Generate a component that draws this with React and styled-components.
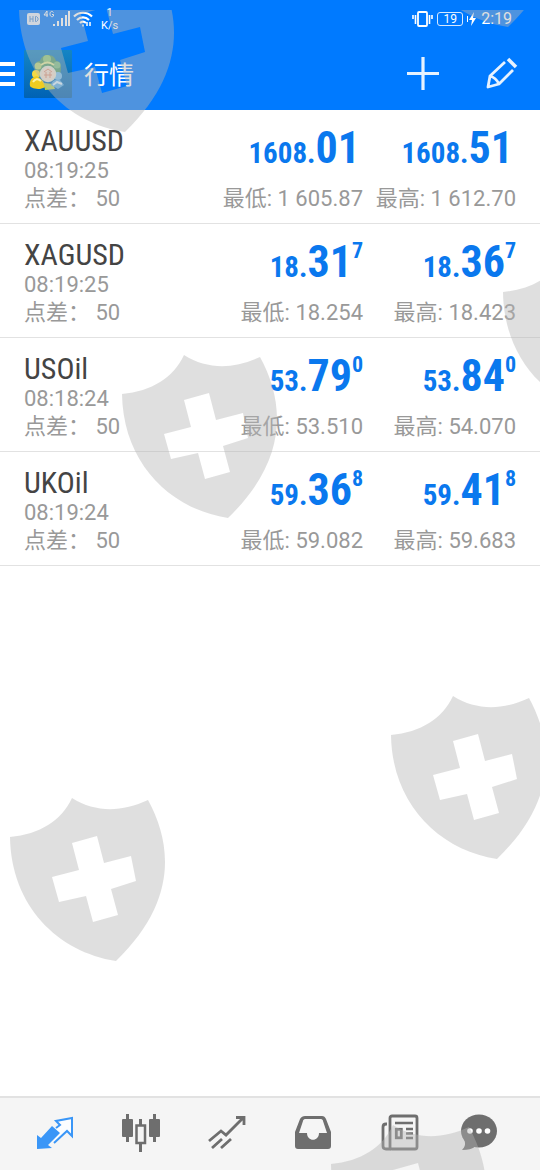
import React from "react";
import styled, { createGlobalStyle } from "styled-components";

const BLUE = "#007aff";

const GlobalStyle = createGlobalStyle`
  * { box-sizing: border-box; }
  body {
    margin: 0;
    background: #fff;
    font-family: Roboto, "Noto Sans CJK SC", sans-serif;
  }
  button { border: 0; padding: 0; background: none; font: inherit; color: inherit; cursor: pointer; }
  svg { display: block; }
`;

const Page = styled.div`
  position: relative;
  display: flex;
  flex-direction: column;
  min-height: 100vh;
  background: #fff;
`;

const TopArea = styled.header`
  background: ${BLUE};
  color: #fff;
`;

const StatusBar = styled.div`
  display: flex;
  justify-content: space-between;
  align-items: center;
  height: 38px;
  padding: 0 28px 0 26px;
`;

const StatusGroup = styled.div`
  display: flex;
  align-items: center;
  gap: 4px;
`;

const NetSpeed = styled.div`
  padding-left: 4px;
  font-size: 11px;
  line-height: 13px;
  text-align: center;
`;

const Battery = styled.span`
  width: 26px;
  height: 14px;
  border: 1px solid #d5e8ff;
  border-radius: 3px;
  font-size: 12px;
  line-height: 12px;
  text-align: center;
`;

const Clock = styled.time`
  font-size: 16px;
  line-height: 20px;
`;

const TitleBar = styled.div`
  display: flex;
  align-items: center;
  height: 72px;
  padding-right: 22px;
`;

const AppMark = styled.div`
  margin: 0 12px 0 9px;
`;

const Title = styled.h1`
  flex: 1;
  margin: 0;
  padding-top: 4px;
  font-size: 25px;
  line-height: 36px;
  font-weight: 400;
`;

const Actions = styled.div`
  display: flex;
  gap: 44px;
`;

const QuoteList = styled.ul`
  flex: 1;
  margin: 0;
  padding: 0;
  list-style: none;
`;

const QuoteRow = styled.li`
  display: grid;
  grid-template-columns: 1fr 141px 141px;
  column-gap: 12px;
  padding: 14px 24px 10px;
  border-bottom: 1px solid #e2e2e2;
  white-space: nowrap;
`;

const SymbolName = styled.h2`
  margin: 0;
  color: #444;
  font-family: "Roboto Condensed", "Liberation Sans Narrow", Roboto, sans-serif;
  font-size: 30px;
  line-height: 33px;
  font-weight: 400;
`;

const Detail = styled.div`
  color: #999;
  font-size: 22px;
  line-height: 28px;
`;

const Side = styled.div`
  display: flex;
  flex-direction: column;
  align-items: flex-end;
`;

const Price = styled.div`
  height: 61px;
  padding-right: ${(p) => (p.$pip ? 0 : 3)}px;
  color: #0a78ee;
  font-family: "Roboto Condensed", "Liberation Sans Narrow", Roboto, sans-serif;
  font-size: 29px;
  font-weight: 700;
  line-height: 48px;
`;

const Big = styled.span`
  font-size: 44px;
`;

const Pip = styled.sup`
  font-size: 22px;
  line-height: 0;
  vertical-align: 19px;
`;

const TabBar = styled.nav`
  display: flex;
  height: 74px;
  padding: 0 12px;
  border-top: 2px solid #e2e2e2;
  background: #f5f5f5;
`;

const Tab = styled.button`
  flex: 1;
  display: flex;
  align-items: center;
  justify-content: center;
  color: ${(p) => (p.$active ? "#3a96f7" : "#6e6e6e")};
`;

const WatermarkLayer = styled.div`
  position: absolute;
  inset: 10px 0 0 0;
  overflow: hidden;
  pointer-events: none;
`;

const Shield = styled.svg`
  position: absolute;
  left: ${(p) => p.$x}px;
  top: ${(p) => p.$y}px;
`;

const quotes = [
  { name: "XAUUSD", time: "08:19:25", bid: ["1608.", "01", ""], ask: ["1608.", "51", ""], low: "1 605.87", high: "1 612.70" },
  { name: "XAGUSD", time: "08:19:25", bid: ["18.", "31", "7"], ask: ["18.", "36", "7"], low: "18.254", high: "18.423" },
  { name: "USOil", time: "08:18:24", bid: ["53.", "79", "0"], ask: ["53.", "84", "0"], low: "53.510", high: "54.070" },
  { name: "UKOil", time: "08:19:24", bid: ["59.", "36", "8"], ask: ["59.", "41", "8"], low: "59.082", high: "59.683" },
];

const shields = [
  [17, -43], [400, -148], [501, 241], [120, 343], [389, 684], [8, 786], [329, 1113],
];

function Quote({ parts, label, value }) {
  const [small, big, pip] = parts;
  return (
    <Side>
      <Price $pip={pip}>
        {small}<Big>{big}</Big>{pip && <Pip>{pip}</Pip>}
      </Price>
      <Detail>{label}: {value}</Detail>
    </Side>
  );
}

function SignalIcons() {
  return (
    <svg width="67" height="20" viewBox="0 0 67 20" fill="none" stroke="#fff">
      <rect x="1" y="4" width="13" height="12" rx="2" fill="#e6f0fb" stroke="none" />
      <path d="M4 7v6M7 7v6M4 10h3M9.500 7.500v5h1l1.500-1.500v-2l-1.500-1.500z" stroke="#4b90dc" />
      <path d="M21 2l-3 4h4M21 2v6M27.500 3.500C26 1.500 24 2.500 24 5s2 3.500 3.500 2V5.500H26" strokeWidth="1" />
      <path d="M28 17v-2M32 17v-5M36 17V9M40 17V6M43 17V2" strokeWidth="2" />
      <path d="M48 7.500c5-5 13-5 18 0M51 11c3.500-3.500 8.500-3.500 12 0M54 14c2-2 4-2 6 0" strokeWidth="2.200" />
      <path d="M57 17.500v-2M61 13v4M64 13v4" strokeWidth="1.500" />
    </svg>
  );
}

function TerminalMark() {
  return (
    <svg width="48" height="48" viewBox="0 0 48 48">
      <defs>
        <linearGradient id="tile" x1="0" y1="0" x2="0" y2="1">
          <stop offset="0" stopColor="#1585c4" />
          <stop offset="1" stopColor="#0062b4" />
        </linearGradient>
      </defs>
      <rect width="48" height="48" rx="1" fill="url(#tile)" />
      <path d="M11 17c0-4 2-6 5-6 1-4 4-6 8-6s7 2 8 6c3 0 5 3 5 7l-1 9H12z" fill="#4f9d6e" />
      <circle cx="23" cy="9" r="4" fill="#8fca7c" />
      <circle cx="14" cy="16" r="3.500" fill="#b8d77c" />
      <circle cx="33" cy="15" r="3.500" fill="#7cc08a" />
      <path d="M17 15c4-3 9-3 13 0" fill="none" stroke="#e3ec9c" strokeWidth="2" />
      <circle cx="12" cy="24" r="4" fill="#f4da45" />
      <path d="M6 36c-1-6 2-9 7-10l6 5 3 6-6 2c-5 0-9-1-10-3z" fill="#f0cc20" />
      <path d="M9 32c2-3 5-4 8-1" fill="none" stroke="#fff3a0" strokeWidth="2" />
      <path d="M20 33l9 1 2 5-10 1z" fill="#b5cf58" />
      <circle cx="34" cy="26" r="4" fill="#74bff0" />
      <path d="M27 35c1-5 5-6 9-5l4 5-6 4z" fill="#5aaee8" />
      <path d="M29 35l4-3 5 2" fill="none" stroke="#d8efff" strokeWidth="2" />
      <circle cx="24" cy="24" r="7.500" fill="#f1dfd0" stroke="#dfe6d8" strokeWidth="1.500" />
      <path d="M20 22l4-3 4 3M20 25h8M22 22v6M26 22v6" fill="none" stroke="#dd9378" strokeWidth="1" />
    </svg>
  );
}

const tabs = [
  {
    label: "行情",
    icon: (
      <>
        <path d="M25 18l4-3-4-4 16-3v18l-5-5-13 12" fill="#fbfdff" stroke="currentColor" strokeWidth="2" />
        <path d="M6 39V25l4 3L21 16l8 7-12 12 4 3z" fill="currentColor" />
      </>
    ),
  },
  {
    label: "图表",
    icon: (
      <g fill="currentColor">
        <rect x="5" y="9" width="11" height="18" rx="1" />
        <rect x="9" y="4" width="3" height="28" />
        <rect x="32" y="9" width="11" height="18" rx="1" />
        <rect x="36" y="4" width="3" height="28" />
        <rect x="22" y="9" width="3" height="33" />
        <rect x="19.500" y="15.500" width="8.500" height="17.500" fill="#f5f5f5" stroke="currentColor" strokeWidth="2.500" />
      </g>
    ),
  },
  {
    label: "交易",
    icon: (
      <path d="M6 31l12-10 5 4L40 8M33 7.500h8V15M9 38l10-9M18 38l10-9" fill="none" stroke="currentColor" strokeWidth="2.800" />
    ),
  },
  {
    label: "历史",
    icon: (
      <path
        fill="currentColor"
        fillRule="evenodd"
        d="M16 6h17c2 0 3 1 4 3l5 13v14c0 2-1 3-3 3H9c-2 0-3-1-3-3V22l5-13c1-2 3-3 5-3zM16 9c-1 0-2 1-2 2l-4 12h8c0 9 12 9 12 0h8l-4-12c0-1-1-2-2-2z"
      />
    ),
  },
  {
    label: "新闻",
    icon: (
      <g fill="none" stroke="currentColor" strokeWidth="2.800">
        <rect x="15" y="6" width="27" height="33" rx="2" />
        <path d="M12 14h-1c-2 0-3 1-3 3v19c0 2 1 3 3 3h5" />
        <path d="M20 13h18M31 19h7M31 23.500h7M31 28h7" strokeWidth="2.400" />
        <rect x="21.300" y="19.300" width="5" height="8.500" />
      </g>
    ),
  },
  {
    label: "消息",
    icon: (
      <>
        <ellipse cx="18" cy="21" rx="18" ry="16.500" fill="currentColor" />
        <path d="M3 29c2 5 1 8-2 11 6 0 10-1 14-4z" fill="currentColor" />
        <g fill="#fff">
          <circle cx="9" cy="21" r="2.800" />
          <circle cx="18" cy="21" r="2.800" />
          <circle cx="26.500" cy="21" r="2.800" />
        </g>
      </>
    ),
  },
];

export default function App() {
  return (
    <Page>
      <GlobalStyle />
      <TopArea>
        <StatusBar>
          <StatusGroup>
            <SignalIcons />
            <NetSpeed>1<br />K/s</NetSpeed>
          </StatusGroup>
          <StatusGroup>
            <svg width="21" height="18" viewBox="0 0 21 18" fill="none" stroke="#fff" strokeWidth="1.800">
              <rect x="6" y="2" width="9" height="14" rx="1" />
              <path d="M1 5v4M3.500 5v9M20 5v4M17.500 5v9" strokeWidth="1.600" />
            </svg>
            <Battery>19</Battery>
            <svg width="10" height="16" viewBox="0 0 10 16" fill="#fff">
              <path d="M0 5h1v6H0zM7 1L2 9h3l-1 6 5-8H6z" />
            </svg>
            <Clock>2:19</Clock>
          </StatusGroup>
        </StatusBar>
        <TitleBar>
          <button aria-label="菜单">
            <svg width="15" height="24" viewBox="0 0 15 24" fill="#fff">
              <path d="M0 0h15v4H0zM0 10h15v4H0zM0 20h15v4H0z" />
            </svg>
          </button>
          <AppMark><TerminalMark /></AppMark>
          <Title>行情</Title>
          <Actions>
            <button aria-label="添加">
              <svg width="34" height="34" viewBox="0 0 34 34" stroke="#e6f2ff" strokeWidth="3.200">
                <path d="M17 0v33M1 16.500h32" />
              </svg>
            </button>
            <button aria-label="编辑">
              <svg width="34" height="34" viewBox="0 0 34 34" fill="none" stroke="#e6f2ff" strokeWidth="2.800" strokeLinejoin="round">
                <path d="M21 5L6 19 4 30l11-3 14-14M6 19c4 1 7 4 9 8" />
                <path d="M24 2l8 8" strokeWidth="3.600" />
              </svg>
            </button>
          </Actions>
        </TitleBar>
      </TopArea>

      <QuoteList>
        {quotes.map((q) => (
          <QuoteRow key={q.name}>
            <div>
              <SymbolName>{q.name}</SymbolName>
              <Detail>{q.time}</Detail>
              <Detail>点差： 50</Detail>
            </div>
            <Quote parts={q.bid} label="最低" value={q.low} />
            <Quote parts={q.ask} label="最高" value={q.high} />
          </QuoteRow>
        ))}
      </QuoteList>

      <TabBar>
        {tabs.map((t, i) => (
          <Tab key={t.label} aria-label={t.label} $active={i === 0}>
            <svg width="48" height="48" viewBox="0 0 48 48">{t.icon}</svg>
          </Tab>
        ))}
      </TabBar>

      <WatermarkLayer aria-hidden="true">
        {shields.map(([x, y]) => (
          <Shield key={`${x}-${y}`} $x={x} $y={y} width="160" height="168" viewBox="0 0 160 168">
            <path
              fill="#b5b5b5"
              fillOpacity="0.43"
              fillRule="evenodd"
              d="M2 41C32 38 53 25 64 2 88 17 114 16 140 4 164 48 170 105 108 165 50 156 3 110 2 41zM64 47l7 27-27 7 7 25 27-6 7 26 25-7-7-26 25-8-5-25-27 7-7-27z"
            />
          </Shield>
        ))}
      </WatermarkLayer>
    </Page>
  );
}
